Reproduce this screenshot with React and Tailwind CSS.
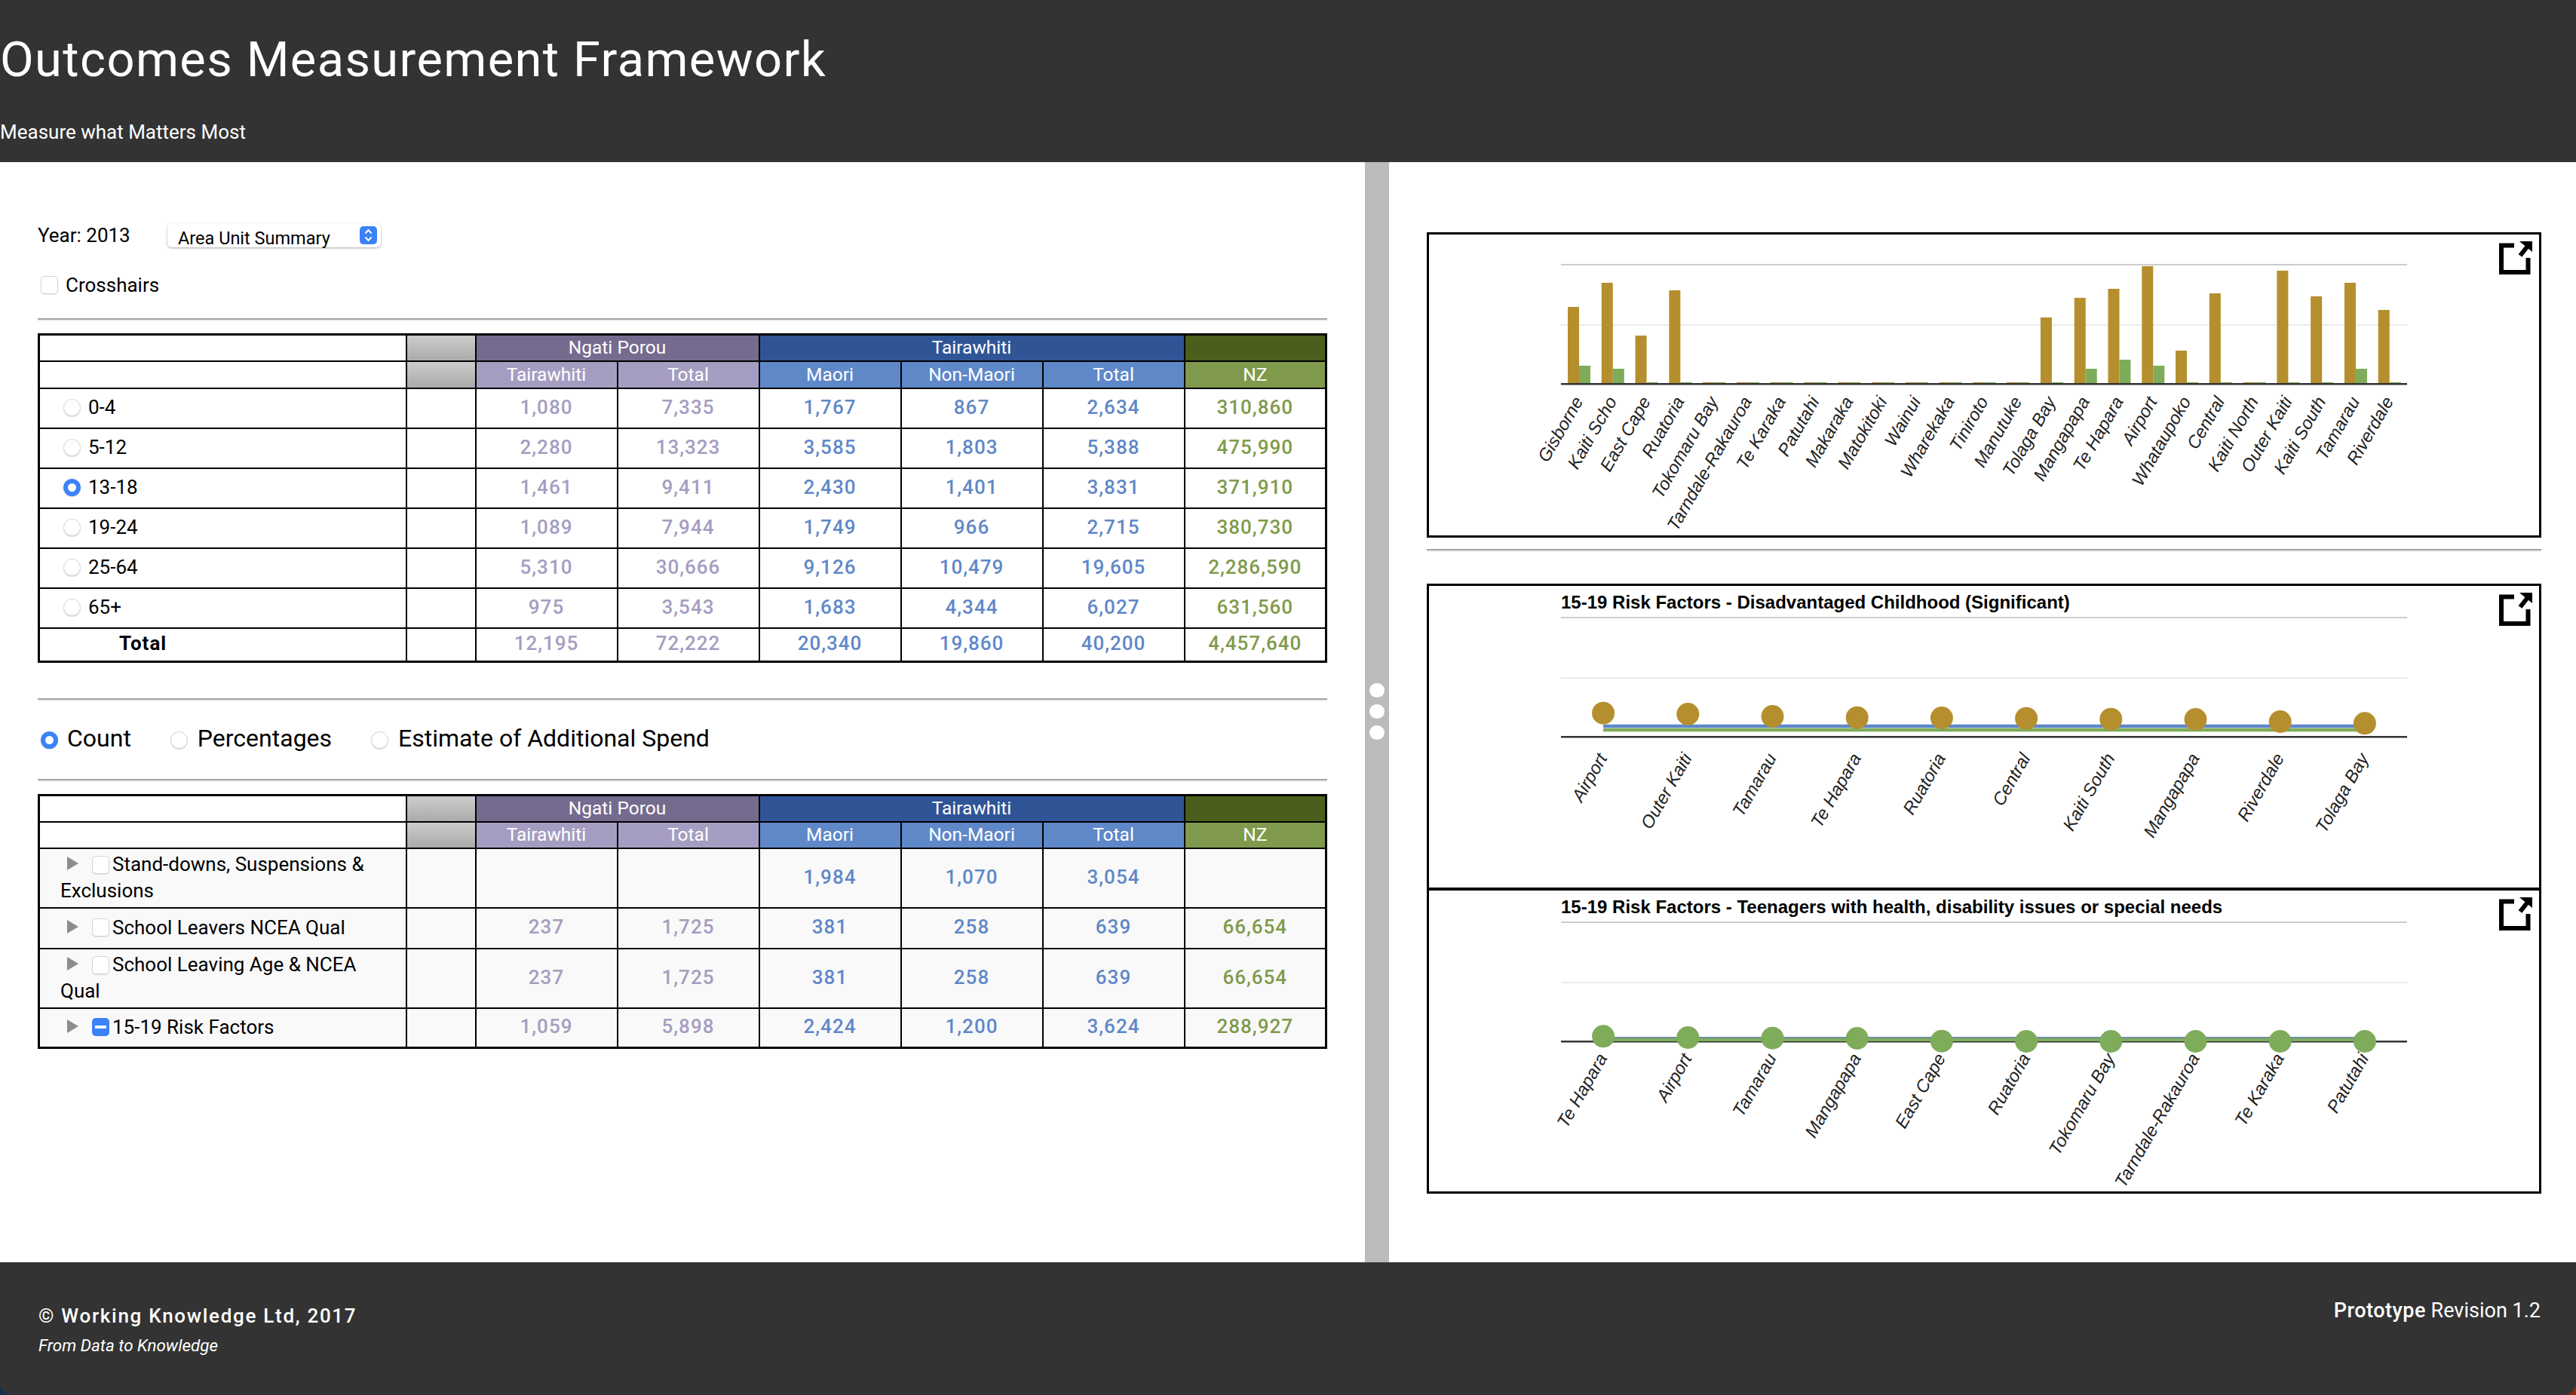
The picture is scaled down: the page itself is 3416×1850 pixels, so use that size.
import React from 'react';

const ageRows = [
    ['0-4', '1,080', '7,335', '1,767', '867', '2,634', '310,860'],
    ['5-12', '2,280', '13,323', '3,585', '1,803', '5,388', '475,990'],
    ['13-18', '1,461', '9,411', '2,430', '1,401', '3,831', '371,910'],
    ['19-24', '1,089', '7,944', '1,749', '966', '2,715', '380,730'],
    ['25-64', '5,310', '30,666', '9,126', '10,479', '19,605', '2,286,590'],
    ['65+', '975', '3,543', '1,683', '4,344', '6,027', '631,560'],
];
const totals = ['12,195', '72,222', '20,340', '19,860', '40,200', '4,457,640'];

const outcomeRows = [
    { label: 'Stand-downs, Suspensions & Exclusions', h: 'h-[79px]', values: ['', '', '1,984', '1,070', '3,054', ''] },
    { label: 'School Leavers NCEA Qual', h: 'h-[54px]', values: ['237', '1,725', '381', '258', '639', '66,654'] },
    { label: 'School Leaving Age & NCEA Qual', h: 'h-[79px]', values: ['237', '1,725', '381', '258', '639', '66,654'] },
    { label: '15-19 Risk Factors', h: 'h-[53px]', values: ['1,059', '5,898', '2,424', '1,200', '3,624', '288,927'], active: true },
];

const valueColors = ['text-[#a59dc1]', 'text-[#a59dc1]', 'text-[#5f88c9]', 'text-[#5f88c9]', 'text-[#5f88c9]', 'text-[#7f9a4c]'];

const areaBars = [
    ['Gisborne', 101, 23], ['Kaiti Scho', 133, 19], ['East Cape', 63, 1], ['Ruatoria', 123, 1],
    ['Tokomaru Bay', 1, 1], ['Tarndale-Rakauroa', 1, 1], ['Te Karaka', 1, 1], ['Patutahi', 1, 1],
    ['Makaraka', 1, 1], ['Matokitoki', 1, 1], ['Wainui', 1, 1], ['Wharekaka', 1, 1],
    ['Tiniroto', 1, 1], ['Manutuke', 1, 1], ['Tolaga Bay', 87, 1], ['Mangapapa', 113, 19],
    ['Te Hapara', 125, 31], ['Airport', 155, 23], ['Whataupoko', 43, 1], ['Central', 119, 1],
    ['Kaiti North', 1, 1], ['Outer Kaiti', 149, 1], ['Kaiti South', 115, 1], ['Tamarau', 133, 19],
    ['Riverdale', 97, 1],
];

const disadvantaged = [
    ['Airport', 945.7], ['Outer Kaiti', 947], ['Tamarau', 950], ['Te Hapara', 951.7], ['Ruatoria', 952],
    ['Central', 952.7], ['Kaiti South', 953.7], ['Mangapapa', 954], ['Riverdale', 957], ['Tolaga Bay', 959.3],
];

const teenagers = [
    ['Te Hapara', 1374.3], ['Airport', 1376], ['Tamarau', 1376.7], ['Mangapapa', 1377], ['East Cape', 1380.7],
    ['Ruatoria', 1381], ['Tokomaru Bay', 1381], ['Tarndale-Rakauroa', 1381], ['Te Karaka', 1381], ['Patutahi', 1381],
];

const plotX = 175;
const plotW = 1122;

const Radio = ({ checked, className = '' }) => (
    <input
        type='radio'
        readOnly
        checked={!!checked}
        className={`appearance-none inline-block align-middle w-[23px] h-[23px] rounded-full shadow-[0_1px_1px_rgba(0,0,0,0.15)] ${checked ? 'border-[6px] border-[#3b82f6] bg-white' : 'border border-[#d4d4d4] bg-white'} ${className}`}
    />
);

const Checkbox = ({ className = '' }) => (
    <input
        type='checkbox'
        readOnly
        checked={false}
        className={`appearance-none inline-block align-middle w-[23px] h-[24px] rounded-[5px] border border-[#d4d4d4] bg-white shadow-[0_1px_1px_rgba(0,0,0,0.1)] ${className}`}
    />
);

const Rule = () => <div className='h-[4px] border-t-[2px] border-[#a3a3a3] bg-[#eeeeee]' />;

const TableHead = ({ h1, h2 }) => (
    <thead className='text-[24.5px]'>
        <tr className={h1}>
            <th className='border-2 border-black bg-white' />
            <th className='border-2 border-black bg-gradient-to-b from-[#cccccc] to-[#aaaaaa]' />
            <th colSpan={2} className='border-2 border-black bg-[#756b8f] font-normal text-white'>Ngati Porou</th>
            <th colSpan={3} className='border-2 border-black bg-[#2f5597] font-normal text-white'>Tairawhiti</th>
            <th className='border-2 border-black bg-[#4b5f1c]' />
        </tr>
        <tr className={h2}>
            <th className='border-2 border-black bg-white' />
            <th className='border-2 border-black bg-gradient-to-b from-[#cccccc] to-[#aaaaaa]' />
            <th className='border-2 border-black bg-[#a59dc1] font-normal text-white'>Tairawhiti</th>
            <th className='border-2 border-black bg-[#a59dc1] font-normal text-white'>Total</th>
            <th className='border-2 border-black bg-[#5f88c9] font-normal text-white'>Maori</th>
            <th className='border-2 border-black bg-[#5f88c9] font-normal text-white'>Non-Maori</th>
            <th className='border-2 border-black bg-[#5f88c9] font-normal text-white'>Total</th>
            <th className='border-2 border-black bg-[#7f9a4c] font-normal text-white'>NZ</th>
        </tr>
    </thead>
);

const Cols = () => (
    <colgroup>
        <col className='w-[487px]' />
        <col className='w-[92px]' />
        <col className='w-[188px]' />
        <col className='w-[188px]' />
        <col className='w-[188px]' />
        <col className='w-[188px]' />
        <col className='w-[188px]' />
        <col className='w-[188px]' />
    </colgroup>
);

const Values = ({ values }) => values.map((value, i) => (
    <td key={i} className={`border-2 border-black pb-[3px] text-center text-[26px] font-medium tracking-[1px] ${valueColors[i]}`}>{value}</td>
));

const AgeTable = () => (
    <table className='mt-[16px] w-[1707px] table-fixed border-collapse border-[3px] border-black text-[26px] leading-[28px]'>
        <Cols />
        <TableHead h1='h-[35px]' h2='h-[36px]' />
        <tbody>
            {ageRows.map(([label, ...values]) => (
                <tr key={label} className='h-[53px]'>
                    <td className='border-2 border-black pl-[31px] pb-[3px]'>
                        <Radio checked={label === '13-18'} className='mr-[10px]' />
                        <span className='align-middle'>{label}</span>
                    </td>
                    <td className='border-2 border-black' />
                    <Values values={values} />
                </tr>
            ))}
            <tr className='h-[45px]'>
                <td className='border-2 border-black pl-[105px] pb-[3px] font-bold tracking-[1px]'>Total</td>
                <td className='border-2 border-black' />
                <Values values={totals} />
            </tr>
        </tbody>
    </table>
);

const OutcomeTable = () => (
    <table className='mt-[16px] w-[1707px] table-fixed border-collapse border-[3px] border-black text-[26px] leading-[32px]'>
        <Cols />
        <TableHead h1='h-[35px]' h2='h-[35px]' />
        <tbody>
            {outcomeRows.map((row) => (
                <tr key={row.label} className={`${row.h} bg-[#f9f9f9]`}>
                    <td className='border-2 border-black pl-[27px] pr-[20px] pb-[3px]'>
                        <svg width='15' height='18' viewBox='0 0 15 18' className='inline-block align-middle ml-[9px] mr-[18px] -mt-[3px]'>
                            <path d='M0 0 L15 9 L0 18 Z' fill='#8c8c8c' />
                        </svg>
                        {row.active ? (
                            <span className='inline-flex align-middle items-center justify-center w-[23px] h-[24px] rounded-[5px] bg-[#3b82f6] mr-[4px]'>
                                <span className='w-[15px] h-[4px] bg-white rounded-[1px]' />
                            </span>
                        ) : (
                            <Checkbox className='mr-[4px]' />
                        )}
                        <span className='align-middle'>{row.label}</span>
                    </td>
                    <td className='border-2 border-black' />
                    <Values values={row.values} />
                </tr>
            ))}
        </tbody>
    </table>
);

const Labels = ({ items, step, start, y, dx }) => items.map((label, i) => (
    <text
        key={i}
        x={start + i * step + dx}
        y={y}
        textAnchor='end'
        fontStyle='italic'
        fontSize='23.5'
        fill='#222222'
        transform={`rotate(-60 ${start + i * step + dx} ${y})`}
    >
        {label}
    </text>
));

const Gridlines = ({ top, mid }) => (
    <>
        <rect x={plotX} y={top - 1} width={plotW} height={2} fill='#cccccc' />
        <rect x={plotX} y={mid - 1} width={plotW} height={2} fill='#ebebeb' />
    </>
);

const ExpandIcon = () => (
    <svg width='44' height='44' viewBox='0 0 44 44' className='absolute right-[9px] top-[9px]'>
        <path d='M20 5.5 H3 V41 H38.5 V22' fill='none' stroke='#000000' strokeWidth='6' />
        <path d='M28 19 L39 5' fill='none' stroke='#000000' strokeWidth='6' />
        <path d='M27 0 H44 V14 Z' fill='#000000' />
    </svg>
);

const BarChart = () => {
    const axis = 198;
    return (
        <svg className='block w-full h-full overflow-visible font-["Liberation_Sans",Arial,sans-serif]'>
            <Gridlines top={40} mid={120} />
            {areaBars.map(([name, gold, green], i) => {
                const x = 184 + i * 44.78;
                return (
                    <g key={name}>
                        <rect x={x} y={axis - 1 - gold} width={15} height={gold} fill='#b58f2e' />
                        <rect x={x + 15} y={axis - 1 - green} width={15} height={green} fill='#7fac5a' />
                    </g>
                );
            })}
            <rect x={plotX} y={axis - 1} width={plotW} height={2.5} fill='#333333' />
            <Labels items={areaBars.map((b) => b[0])} step={44.78} start={199} y={axis + 23} dx={6} />
        </svg>
    );
};

const DotChart = ({ title, points, color, pageTop }) => {
    const axis = 200;
    const xs = points.map((_, i) => plotX + 56.1 + i * 112.2);
    const first = xs[0];
    const last = xs[xs.length - 1];
    const ys = points.map((p) => p[1] - pageTop);
    const isGold = color === '#b58f2e';
    return (
        <svg className='block w-full h-full overflow-visible font-["Liberation_Sans",Arial,sans-serif]'>
            <text x={plotX} y={30} fontSize='24' fontWeight='bold' fill='#000000'>{title}</text>
            <Gridlines top={42} mid={122} />
            <rect x={plotX} y={axis - 1} width={plotW} height={2.5} fill='#333333' />
            {isGold ? (
                <>
                    <rect x={first} y={axis - 17} width={last - first} height={6} fill='#5f88c9' fillOpacity='0.3' />
                    <rect x={first} y={axis - 16} width={last - first} height={4} fill='#5f88c9' />
                    <rect x={first} y={axis - 12} width={last - first} height={6} fill='#7fac5a' fillOpacity='0.3' />
                    <rect x={first} y={axis - 11} width={last - first} height={4} fill='#7fac5a' />
                </>
            ) : (
                <>
                    <rect x={first} y={axis - 6} width={last - first} height={2} fill='#6f8fa8' />
                    <rect x={first} y={axis - 4} width={last - first} height={4} fill='#7fac5a' />
                </>
            )}
            {xs.map((x, i) => <circle key={i} cx={x} cy={ys[i]} r={15} fill={color} />)}
            <Labels items={points.map((p) => p[0])} step={112.2} start={first} y={isGold ? axis + 28 : axis + 22} dx={6} />
        </svg>
    );
};

const ChartBox = ({ className, children }) => (
    <div className={`relative border-[3px] border-black ${className}`}>
        {children}
        <ExpandIcon />
    </div>
);

export default function App() {
    return (
        <div className='w-[3416px] h-[1850px] flex flex-col bg-white text-black font-["Roboto",sans-serif]'>
            <header className='h-[215px] bg-[#333333] text-white'>
                <h1 className='pt-[39px] text-[65px] leading-[80px] tracking-[1.4px]'>Outcomes Measurement Framework</h1>
                <p className='mt-[40px] text-[26px] leading-[32px]'>Measure what Matters Most</p>
            </header>

            <main className='flex-1 flex min-h-0'>
                <section className='w-[1810px] pl-[50px] pr-[50px] pt-[81px]'>
                    <div className='flex items-center h-[32px] text-[26px]'>
                        <span className='w-[172px]'>Year: 2013</span>
                        <div className='relative w-[283px] h-[32px] rounded-[6px] bg-white shadow-[0_1px_3px_rgba(0,0,0,0.35)]'>
                            <select className='appearance-none w-full h-full pl-[14px] pb-[6px] text-[23.5px] leading-[26px] bg-transparent outline-none'>
                                <option>Area Unit Summary</option>
                            </select>
                            <span className='absolute right-[5px] top-[4px] w-[23px] h-[24px] rounded-[5px] bg-[#3b82f6]'>
                                <svg width='23' height='24' viewBox='0 0 23 24'>
                                    <path d='M7.5 9.5 L11.5 5 L15.5 9.5 M7.5 14.5 L11.5 19 L15.5 14.5' fill='none' stroke='#ffffff' strokeWidth='2' />
                                </svg>
                            </span>
                        </div>
                    </div>
                    <label className='mt-[38px] ml-[4px] flex items-center gap-[10px] h-[24px] text-[26px]'>
                        <Checkbox />
                        Crosshairs
                    </label>
                    <div className='mt-[32px]'><Rule /></div>
                    <AgeTable />
                    <div className='mt-[47px]'><Rule /></div>
                    <div className='mt-[35px] ml-[4px] flex items-center h-[32px] text-[32px]'>
                        <Radio checked className='mr-[12px]' />
                        <span className='mr-[52px] pb-[4px]'>Count</span>
                        <Radio className='mr-[13px]' />
                        <span className='mr-[52px] pb-[4px]'>Percentages</span>
                        <Radio className='mr-[13px]' />
                        <span className='pb-[4px]'>Estimate of Additional Spend</span>
                    </div>
                    <div className='mt-[36px]'><Rule /></div>
                    <OutcomeTable />
                </section>

                <div className='w-[32px] bg-[#bbbbbb] flex flex-col items-center justify-center gap-[9px] pb-[3px]'>
                    <span className='w-[20px] h-[19px] rounded-full bg-white' />
                    <span className='w-[20px] h-[19px] rounded-full bg-white' />
                    <span className='w-[20px] h-[19px] rounded-full bg-white' />
                </div>

                <section className='flex-1 pl-[50px] pr-[46px] pt-[93px]'>
                    <ChartBox className='h-[405px]'>
                        <BarChart />
                    </ChartBox>
                    <div className='mt-[15px] mb-[42px]'><Rule /></div>
                    <ChartBox className='h-[406px]'>
                        <DotChart title='15-19 Risk Factors - Disadvantaged Childhood (Significant)' points={disadvantaged} color='#b58f2e' pageTop={777} />
                    </ChartBox>
                    <ChartBox className='h-[405px] -mt-[2px]'>
                        <DotChart title='15-19 Risk Factors - Teenagers with health, disability issues or special needs' points={teenagers} color='#7fac5a' pageTop={1181} />
                    </ChartBox>
                </section>
            </main>

            <footer className='h-[176px] bg-gradient-to-r from-[#12304f] to-[#8a2a14]'>
                <div className='h-full flex justify-between bg-[#333333] rounded-b-[16px] pl-[51px] pr-[47px] text-white'>
                    <div className='pt-[55px]'>
                        <p className='text-[26px] leading-[32px] font-medium tracking-[1.7px]'>© Working Knowledge Ltd, 2017</p>
                        <p className='mt-[7px] text-[22.4px] leading-[32px] italic'>From Data to Knowledge</p>
                    </div>
                    <p className='pt-[48px] text-[27px] leading-[32px]'><span className='font-medium tracking-[0.5px]'>Prototype</span> Revision 1.2</p>
                </div>
            </footer>
        </div>
    );
}
